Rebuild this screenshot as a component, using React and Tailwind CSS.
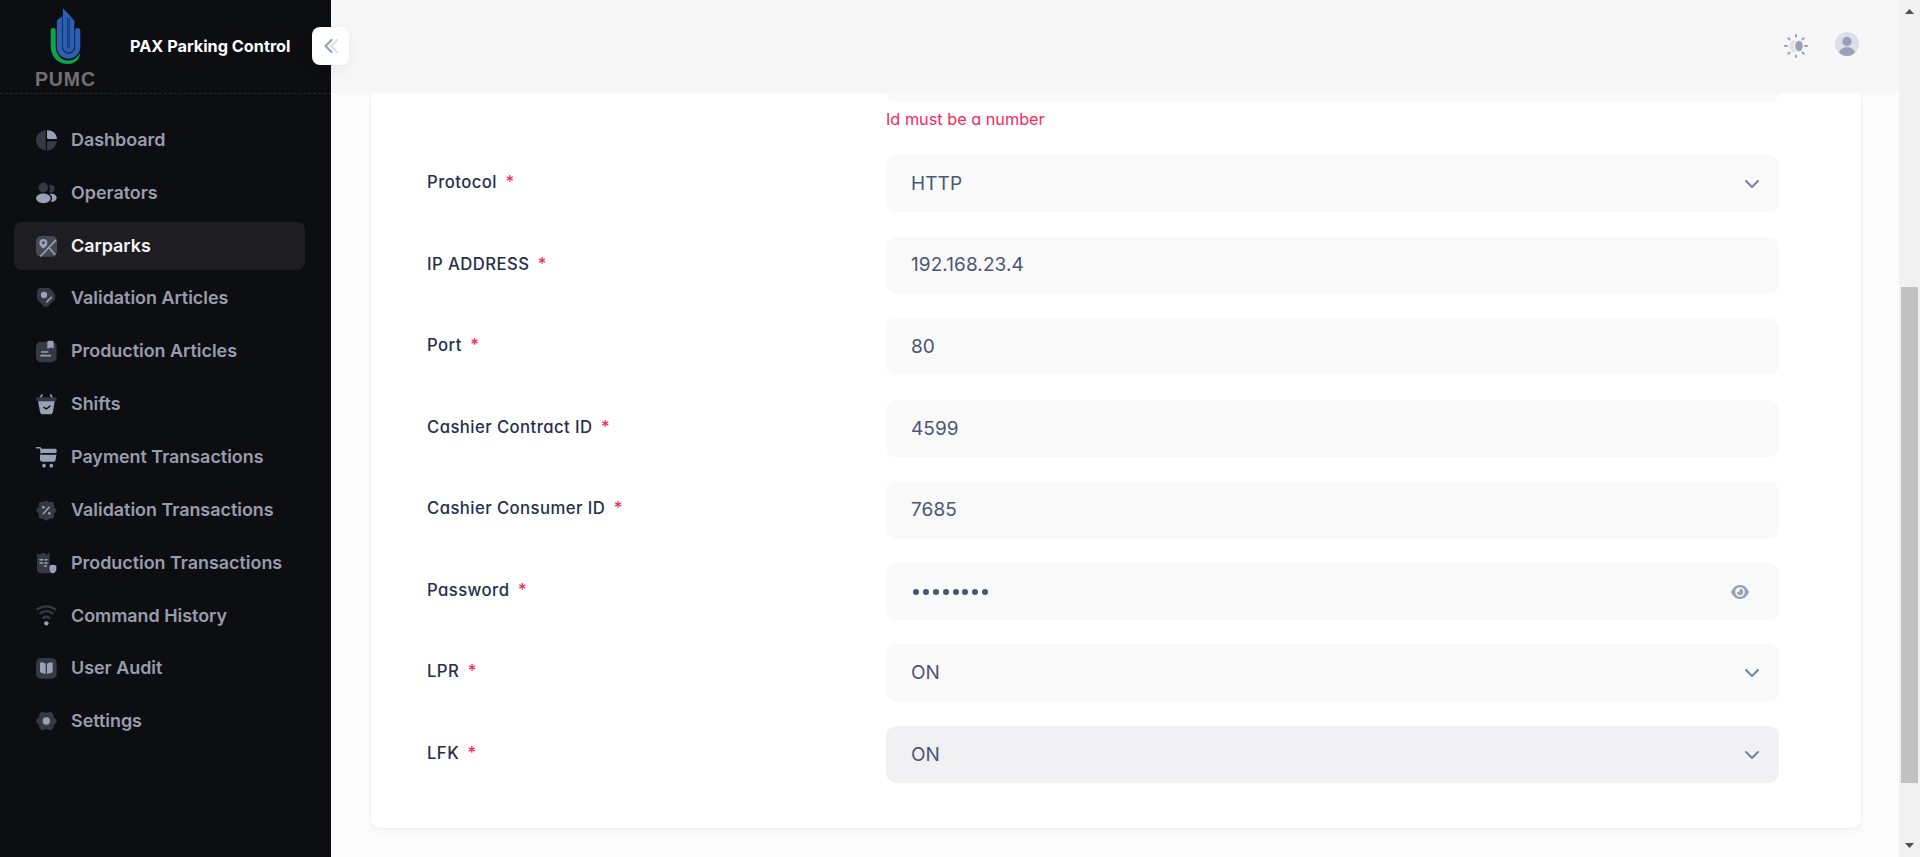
import React from "react";

const H = "#99A1B7";
const D = "#363843";

function Icon({ children }) {
  return (
    <svg viewBox="0 0 63 63" className="h-[21px] w-[21px] shrink-0 overflow-visible">
      {children}
    </svg>
  );
}

const icons = {
  dashboard: (
    <Icon>
      <path d="M29 1V61C12 60 0 47 0 31S12 2 29 1Z" fill={D} />
      <path d="M33 1C50 0 62 12 63 27H38Q33 27 33 23Z" fill={H} />
      <path d="M33 39Q33 34 39 34H62C60 50 50 61 33 62Z" fill={D} />
    </Icon>
  ),
  operators: (
    <Icon>
      <circle cx="22" cy="14" r="14.500" fill={D} />
      <path d="M39 6C46 3 56 8 56 17C56 27 46 31 39 28C43 21 43 13 39 6Z" fill={D} />
      <ellipse cx="22" cy="46" rx="22" ry="14.500" fill={H} />
      <path d="M41 33C54 31 62 37 62 44.500C62 52 55 58 44 56C50 49 50 40 41 33Z" fill={H} />
    </Icon>
  ),
  carparks: (
    <Icon>
      <rect width="63" height="62" rx="15" fill="#464854" />
      <path d="M59 13L14 60M39 35L56 55" stroke={H} strokeWidth="5" strokeLinecap="round" fill="none" />
      <path fillRule="evenodd" d="M22 9A12 12 0 0 1 34 21C34 29 28 33 25 36Q22 38 19 36C15 33 10 29 10 21A12 12 0 0 1 22 9ZM22 16A4.500 4.500 0 1 0 22 25A4.500 4.500 0 1 0 22 16Z" fill={H} />
    </Icon>
  ),
  validation: (
    <Icon>
      <path d="M15 0H36Q41 0 45 4L56 18Q61 25 57 33L37 54Q31 60 24 55L7 39Q3 35 3 30V13Q3 0 15 0Z" fill={D} />
      <circle cx="24" cy="21" r="9.500" fill={H} />
      <path d="M32 42L46 28" stroke={H} strokeWidth="5" strokeLinecap="round" />
    </Icon>
  ),
  production: (
    <Icon>
      <rect y="2" width="62" height="62" rx="15" fill={D} />
      <path d="M34 3Q34 -1 38 -1H49Q53 -1 53 3V22L47 20Q43 19 39 22Q34 25 34 21Z" fill={H} />
      <path d="M17 33H35M15 44H43" stroke={H} strokeWidth="5" strokeLinecap="round" />
    </Icon>
  ),
  shifts: (
    <Icon>
      <path d="M18 3L12 13M44 3L50 13" stroke={H} strokeWidth="5" strokeLinecap="round" />
      <rect y="10" width="62" height="12" rx="6" fill={D} />
      <path d="M6 22H56L51 53Q49 61 42 61H20Q13 61 12 53Z" fill={H} />
      <path d="M24 40L31 45L42 36" stroke="#0D0E12" strokeWidth="4.500" fill="none" strokeLinecap="round" strokeLinejoin="round" />
    </Icon>
  ),
  payment: (
    <Icon>
      <path d="M2 2H11Q14 2 15 7L16 18" stroke={H} strokeWidth="4.500" strokeLinecap="round" fill="none" />
      <path d="M13 5H57Q63 5 62 11L61 18H14Z" fill={H} />
      <path d="M12 23H61L59 38Q58 44 52 44H19Q12 44 12 37Z" fill={H} />
      <circle cx="24" cy="56" r="5.500" fill={H} />
      <circle cx="46" cy="56" r="5.500" fill={H} />
    </Icon>
  ),
  validationTx: (
    <Icon>
      <path d="M27 3Q31 -1 35 3L38 6H48Q54 6 54 12V22L60 27Q63 31 60 35L54 40V50Q54 56 48 56H40L35 60Q31 63 27 60L22 56H14Q8 56 8 50V40L2 35Q-1 31 2 27L8 22V12Q8 6 14 6H24Z" fill={D} />
      <path d="M22 41L40 21" stroke={H} strokeWidth="4.500" strokeLinecap="round" />
      <circle cx="22" cy="22" r="4" fill={H} />
      <circle cx="40" cy="40" r="4" fill={H} />
    </Icon>
  ),
  productionTx: (
    <Icon>
      <path d="M3 3Q3 0 6 2L10 5L17 1Q22 -2 27 1L32 5L38 1Q41 0 41 3V33Q38 36 38 42V50Q38 58 44 61H16Q3 61 3 48Z" fill={D} />
      <path d="M12 20H20M27 20H33M12 30H20M27 30H33M25 39H31" stroke={H} strokeWidth="4.500" strokeLinecap="round" />
      <path d="M40 38Q51 32 61 38V49Q61 58 51 61Q40 61 40 49Z" fill={H} />
    </Icon>
  ),
  command: (
    <Icon>
      <path d="M4 13C20 1 42 1 58 13M13 25C24 17 38 17 49 25M22 39C27 35 35 35 40 39" stroke={D} strokeWidth="7" strokeLinecap="round" fill="none" />
      <circle cx="31" cy="55" r="6.500" fill={H} />
    </Icon>
  ),
  audit: (
    <Icon>
      <rect width="62" height="62" rx="15" fill={D} />
      <path d="M12 17Q12 11 18 13L27 16Q29 17 29 20V48L15 44Q12 43 12 40Z" fill={H} />
      <path d="M50 17Q50 11 44 13L35 16Q33 17 33 20V48L47 44Q50 43 50 40Z" fill={H} />
    </Icon>
  ),
  settings: (
    <Icon>
      <path d="M17 3Q23 0 27 5H35Q39 0 45 3Q54 7 52 15L55 21Q62 22 62 30Q62 38 55 39L52 45Q54 53 45 57Q39 60 35 54H27Q23 60 17 57Q8 53 10 45L7 39Q0 38 0 30Q0 22 7 21L10 15Q8 7 17 3Z" fill={D} />
      <circle cx="31" cy="30" r="11" fill={H} />
    </Icon>
  ),
};

const nav = [
  ["Dashboard", "dashboard"],
  ["Operators", "operators"],
  ["Carparks", "carparks"],
  ["Validation Articles", "validation"],
  ["Production Articles", "production"],
  ["Shifts", "shifts"],
  ["Payment Transactions", "payment"],
  ["Validation Transactions", "validationTx"],
  ["Production Transactions", "productionTx"],
  ["Command History", "command"],
  ["User Audit", "audit"],
  ["Settings", "settings"],
];

const fields = [
  { label: "Protocol", value: "HTTP", type: "select" },
  { label: "IP ADDRESS", value: "192.168.23.4" },
  { label: "Port", value: "80" },
  { label: "Cashier Contract ID", value: "4599" },
  { label: "Cashier Consumer ID", value: "7685" },
  { label: "Password", value: "", type: "password" },
  { label: "LPR", value: "ON", type: "select" },
  { label: "LFK", value: "ON", type: "select", active: true },
];

function Logo() {
  return (
    <svg viewBox="0 0 66 84" className="ml-[33px] mt-[6px] h-[84px] w-[66px] shrink-0">
      <path d="M17.700 24Q17.700 22 20.200 22T22.700 24V39C22.700 49 28 54.500 35.500 54.500C40 54.500 44 52 47.300 47C47 53 42 58 35 58C25 58 17.700 51 17.700 40Z" fill="#0BA34E" />
      <path d="M23.900 14.500L28.500 10.500L29.100 11V41A6.500 6.500 0 0 0 42.100 41V24.500Q42.100 22 44.700 22T47.300 24.500V41A11.700 11.700 0 0 1 23.900 41Z" fill="#2B5FB3" />
      <path d="M29.800 2.300L36.500 9L41.100 14.500V41A5.650 5.650 0 0 1 29.800 41Z" fill="#2B5FB3" />
      <path d="M34.600 12V41A0.850 0.850 0 0 0 36.300 41V12" stroke="#17305C" strokeWidth="0.900" fill="none" />
      <path d="M29.450 10V41A6 6 0 0 0 41.550 41V15" stroke="#17305C" strokeWidth="0.900" fill="none" />
      <text x="2" y="79.500" textLength="60" fontFamily="Liberation Sans" fontWeight="700" fontSize="19.500" fill="#707174">PUMC</text>
    </svg>
  );
}

function Chevron() {
  return (
    <svg viewBox="0 0 16 16" className="mr-[19px] h-4 w-4" fill="none" stroke="#78829D" strokeWidth="2" strokeLinecap="round" strokeLinejoin="round">
      <path d="M2 5l6 6 6-6" />
    </svg>
  );
}

function Field({ label, value, type, active }) {
  return (
    <div className="flex h-[57.200px] shrink-0">
      <div className="w-[459px] shrink-0 pt-[15px] text-[16.700px] font-medium leading-6 tracking-[0.430px] text-[#252F4A]">
        {label}
        <span className="ml-[8.500px] text-[#F8285A]">*</span>
      </div>
      <div className={"flex w-[893px] items-center justify-between rounded-[10px] pl-[25px] text-[19px] tracking-[0.080px] text-[#4B5675] " + (active ? "bg-[#F1F1F4]" : "bg-[#F9F9F9]")}>
        {type === "password" ? (
          <>
            <span className="flex gap-[3.900px] pl-[2px] pt-[2px]">
              {Array.from({ length: 8 }, (_, i) => (
                <i key={i} className="h-[6px] w-[6px] rounded-full bg-[#4B5675]" />
              ))}
            </span>
            <svg viewBox="0 0 18 14" className="mr-[30px] mt-px h-[14px] w-[18px]">
              <path fillRule="evenodd" d="M9 0C13 0 16 2.500 18 7C16 11.500 13 14 9 14S2 11.500 0 7C2 2.500 5 0 9 0ZM9 2.200A4.800 4.800 0 1 0 9 11.800A4.800 4.800 0 1 0 9 2.200Z" fill="#99A1B7" />
              <path d="M9 3.800A3.200 3.200 0 1 1 5.800 7.200Q8.800 7.500 9 3.800Z" fill="#99A1B7" />
            </svg>
          </>
        ) : (
          <span className="pt-px">{value}</span>
        )}
        {type === "select" && <Chevron />}
      </div>
    </div>
  );
}

function Scrollbar() {
  return (
    <div className="flex h-full w-[21px] shrink-0 flex-col items-center bg-[#F1F1F1]">
      <svg viewBox="0 0 9 5" className="mt-[9px] h-[5px] w-[9px]"><path d="M4.500 0L9 5H0Z" fill="#505050" /></svg>
      <div className="mt-[273px] h-[496px] w-[17px] bg-[#C1C1C1]" />
      <svg viewBox="0 0 9 5" className="mt-[60px] h-[5px] w-[9px]"><path d="M0 0H9L4.500 5Z" fill="#505050" /></svg>
    </div>
  );
}

export default function App() {
  return (
    <div className="flex h-[857px] w-[1920px] overflow-hidden bg-[#FCFCFC] font-['Inter',sans-serif]">
      <aside className="relative z-10 w-[331px] shrink-0 bg-[#0D0E12]">
        <div className="flex h-[94px] border-b border-dashed border-[#26272F]">
          <Logo />
          <div className="ml-[31px] flex items-center whitespace-nowrap text-[16.250px] font-bold text-white">PAX Parking Control</div>
        </div>
        <button className="absolute left-[312px] top-[27px] flex h-[38px] w-[37px] items-center justify-center rounded-[8px] bg-white shadow-[0_6px_16px_rgba(0,0,0,0.06)]">
          <svg viewBox="0 0 14 16" className="h-4 w-[14px]" fill="none" strokeWidth="2.200" strokeLinecap="round" strokeLinejoin="round">
            <path d="M13 2L7 8l6 6" stroke="#DDE0E8" />
            <path d="M7.500 2L1.500 8l6 6" stroke="#99A1B7" />
          </svg>
        </button>
        <nav className="ml-[14px] mt-[22.400px] flex w-[291px] flex-col gap-[4.850px]">
          {nav.map(([name, icon]) => (
            <div key={name} className={"flex h-12 items-center gap-[14px] rounded-[8px] pl-[22px] text-[17.900px] font-semibold " + (name === "Carparks" ? "bg-[#1E1D22] text-[#F5F5F5]" : "text-[#9A9CAE]")}>
              {icons[icon]}
              <span className="whitespace-nowrap">{name}</span>
            </div>
          ))}
        </nav>
      </aside>
      <div className="flex min-w-0 flex-1 flex-col">
        <header className="flex h-[93px] shrink-0 items-start justify-end bg-[#F7F7F7] pr-[40px]">
          <svg viewBox="0 0 24 24" className="mt-[34px] h-6 w-6">
            <g stroke="#99A1B7" strokeWidth="2" strokeLinecap="round">
              <path d="M12 1v1.500M12 21.500V23M1 12h2M21 12h2M4.300 4.300l1.200 1.200M18.500 18.500l1.200 1.200M4.300 19.700l1.200-1.200M18.500 5.500l1.200-1.200" />
            </g>
            <path d="M12 5.500A6.500 6.500 0 1 0 12 18.500Q7.500 12 12 5.500Z" fill="#DDE0E8" />
            <ellipse cx="15" cy="12" rx="3.800" ry="5.300" fill="#99A1B7" />
          </svg>
          <svg viewBox="0 0 24 24" className="ml-[27px] mt-[32px] h-6 w-6">
            <circle cx="12" cy="12" r="12" fill="#DBDFE9" />
            <circle cx="12" cy="9.500" r="4.700" fill="#99A1B7" />
            <path d="M4 20.500C6 13.500 18 13.500 20 20.500Q16.500 24 12 24T4 20.500Z" fill="#99A1B7" />
          </svg>
        </header>
        <main className="flex-1 overflow-hidden pl-[39px]">
          <section className="h-[736px] w-[1492px] rounded-b-[10px] border border-t-0 border-[#F1F1F4] bg-white pl-[55px] shadow-[0_4px_6px_rgba(0,0,0,0.03)] [font-feature-settings:'cv11']">
            <div className="ml-[460px] h-[9px] w-[893px] rounded-b-[10px] bg-[#F9F9F9]" />
            <div className="ml-[460px] mt-[5px] h-[48px] text-[16.250px] leading-6 text-[#F8285A]">Id must be a number</div>
            <div className="ml-px flex flex-col gap-[24.400px]">
              {fields.map((f) => (
                <Field key={f.label} {...f} />
              ))}
            </div>
          </section>
        </main>
      </div>
      <Scrollbar />
    </div>
  );
}
